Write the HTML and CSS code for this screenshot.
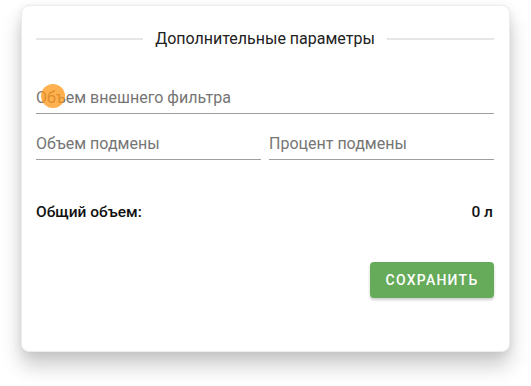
FILE: index.html
```html
<!DOCTYPE html>
<html>
<head>
    <title>Дополнительные параметры</title>
    <meta name="viewport" content="width=device-width, initial-scale=1.0">
    <link rel="stylesheet" href="styles.css">
</head>
<body>
    <div class="card">
        <div class="divider">
            <span class="divider-line"></span>
            <span class="divider-title">Дополнительные параметры</span>
            <span class="divider-line"></span>
        </div>

        <div class="field field-wide">
            <span class="placeholder">Объем внешнего фильтра</span>
            <span class="touch"></span>
        </div>

        <div class="field-row">
            <div class="field">
                <span class="placeholder">Объем подмены</span>
            </div>
            <div class="field">
                <span class="placeholder">Процент подмены</span>
            </div>
        </div>

        <div class="total">
            <span>Общий объем:</span>
            <span>0 л</span>
        </div>

        <div class="actions">
            <button class="save-btn">Сохранить</button>
        </div>
    </div>
</body>
</html>
```

FILE: styles.css
```css
:root {
    --text: #212121;
    --muted: #757575;
    --line: #9e9e9e;
    --soft-line: #e6e6e6;
    --green: #66ab5a;
}

* {
    margin: 0;
    padding: 0;
    box-sizing: border-box;
    font-family: Roboto, 'Liberation Sans', sans-serif;
}

body {
    background: #fff;
    width: 531px;
    height: 386px;
    overflow: hidden;
}

.card {
    margin: 5px 0 0 21px;
    width: 489px;
    height: 347px;
    padding: 21px 15px 0 14px;
    background: #fff;
    border-radius: 8px;
    border: 1px solid #ececec;
    box-shadow: 0 14px 20px rgba(0, 0, 0, 0.2), 0 2px 10px rgba(0, 0, 0, 0.08);
    display: flex;
    flex-direction: column;
}

.divider {
    display: flex;
    align-items: center;
    gap: 12px;
    height: 24px;
}

.divider-line {
    flex: 1;
    height: 2px;
    background: var(--soft-line);
}

.divider-title {
    font-size: 16px;
    line-height: 24px;
    color: var(--text);
}

.field {
    position: relative;
    padding-bottom: 5px;
    border-bottom: 1px solid var(--line);
}

.field-wide {
    margin-top: 37px;
}

.placeholder {
    display: block;
    font-size: 16px;
    line-height: 20px;
    color: var(--muted);
}

.touch {
    position: absolute;
    left: 5px;
    top: -4px;
    width: 24px;
    height: 24px;
    border-radius: 50%;
    background: rgba(255, 150, 20, 0.75);
}

.field-row {
    display: flex;
    gap: 8px;
    margin-top: 20px;
}

.field-row .field {
    flex: 1;
}

.total {
    display: flex;
    justify-content: space-between;
    margin: 42px 1px 0 0;
    font-size: 15.5px;
    line-height: 20px;
    font-weight: 500;
    color: #111;
}

.actions {
    display: flex;
    justify-content: flex-end;
    margin-top: 40px;
}

.save-btn {
    width: 124px;
    height: 36px;
    border: none;
    border-radius: 4px;
    background: var(--green);
    color: #fff;
    font-size: 14px;
    font-weight: 500;
    letter-spacing: 1.25px;
    text-transform: uppercase;
    box-shadow: 0 2px 3px rgba(0, 0, 0, 0.2);
}
```
